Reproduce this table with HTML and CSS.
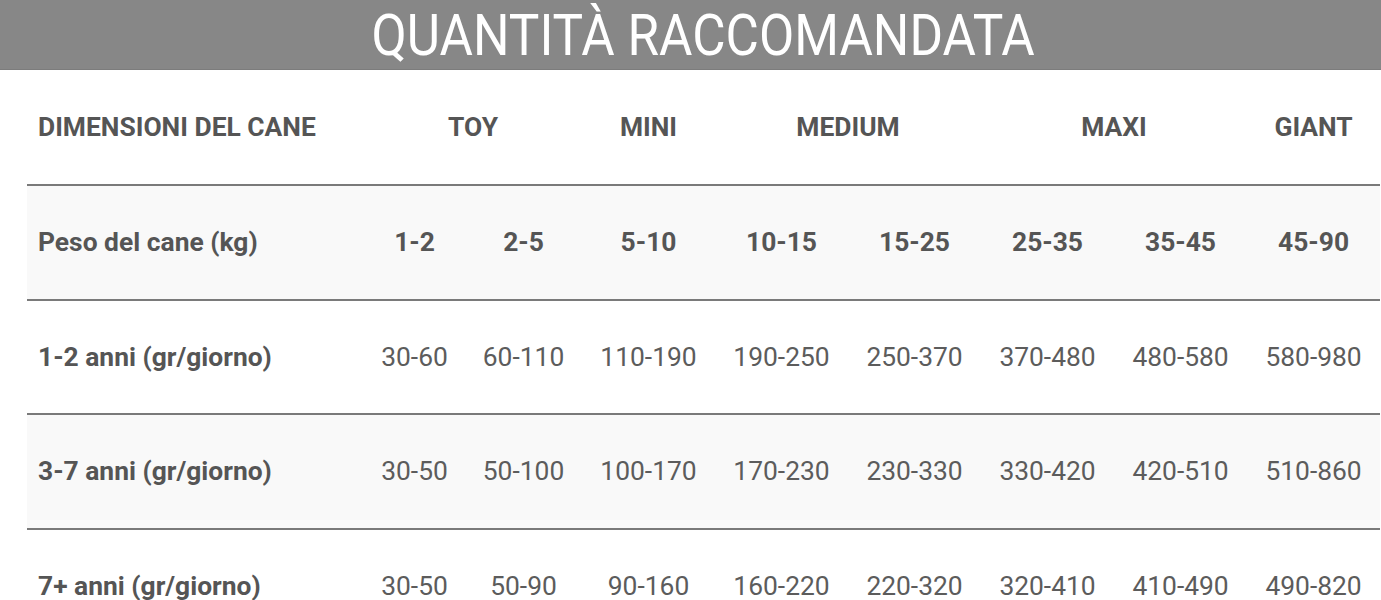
FILE: index.html
```html
<!DOCTYPE html>
<html lang="it">
<head>
<meta charset="utf-8">
<title>Quantità raccomandata</title>
<link rel="stylesheet" href="styles.css">
</head>
<body>
<header class="banner"><h1 class="banner-title"><span class="banner-text">QUANTITÀ RACCOMANDATA</span></h1></header>
<table class="feed">
  <colgroup>
    <col class="c-label"><col class="c-1"><col class="c-2"><col class="c-n"><col class="c-n"><col class="c-n"><col class="c-n"><col class="c-n"><col class="c-n">
  </colgroup>
  <tr class="row head">
    <th class="label">DIMENSIONI DEL CANE</th>
    <th colspan="2">TOY</th>
    <th>MINI</th>
    <th colspan="2">MEDIUM</th>
    <th colspan="2">MAXI</th>
    <th>GIANT</th>
  </tr>
  <tr class="row alt strong">
    <th class="label">Peso del cane (kg)</th>
    <td>1-2</td><td>2-5</td><td>5-10</td><td>10-15</td><td>15-25</td><td>25-35</td><td>35-45</td><td>45-90</td>
  </tr>
  <tr class="row">
    <th class="label">1-2 anni (gr/giorno)</th>
    <td>30-60</td><td>60-110</td><td>110-190</td><td>190-250</td><td>250-370</td><td>370-480</td><td>480-580</td><td>580-980</td>
  </tr>
  <tr class="row alt">
    <th class="label">3-7 anni (gr/giorno)</th>
    <td>30-50</td><td>50-100</td><td>100-170</td><td>170-230</td><td>230-330</td><td>330-420</td><td>420-510</td><td>510-860</td>
  </tr>
  <tr class="row">
    <th class="label">7+ anni (gr/giorno)</th>
    <td>30-50</td><td>50-90</td><td>90-160</td><td>160-220</td><td>220-320</td><td>320-410</td><td>410-490</td><td>490-820</td>
  </tr>
</table>
</body>
</html>
```
FILE: styles.css
```css
html, body {
  margin: 0;
  padding: 0;
  background: #ffffff;
  overflow: hidden;
}
body {
  font-family: Roboto, "Liberation Sans", Arial, sans-serif;
  color: #555555;
}
.banner {
  height: 70px;
  background: #878787;
  border-bottom: 1px solid #7c7c7c;
  box-sizing: border-box;
  padding-left: 26px;
  display: flex;
  align-items: center;
  justify-content: center;
}
.banner-title {
  margin: 0;
  font-weight: 400;
  font-size: 58px;
  line-height: 70px;
  color: #ffffff;
}
.banner-text {
  display: inline-block;
  transform: scaleX(0.884);
  transform-origin: center;
  white-space: nowrap;
}
.feed {
  margin-left: 27px;
  width: 1353px;
  border-collapse: collapse;
  table-layout: fixed;
  font-size: 26.4px;
}
.c-label { width: 337px; }
.c-1 { width: 101px; }
.c-2 { width: 117px; }
.c-n { width: 133px; }
.row {
  height: 114.5px;
  border-top: 2px solid #7a7a7a;
}
.row.head {
  border-top: none;
  height: 115px;
}
.row.alt {
  background: #f9f9f9;
}
.feed th, .feed td {
  padding: 0;
  text-align: center;
  vertical-align: middle;
  white-space: nowrap;
  color: #555555;
}
.feed th {
  font-weight: 700;
}
.feed td {
  font-weight: 400;
  color: #5c5c5c;
}
.row.strong td {
  font-weight: 700;
  color: #555555;
}
.feed th.label {
  text-align: left;
  padding-left: 11px;
}
```
